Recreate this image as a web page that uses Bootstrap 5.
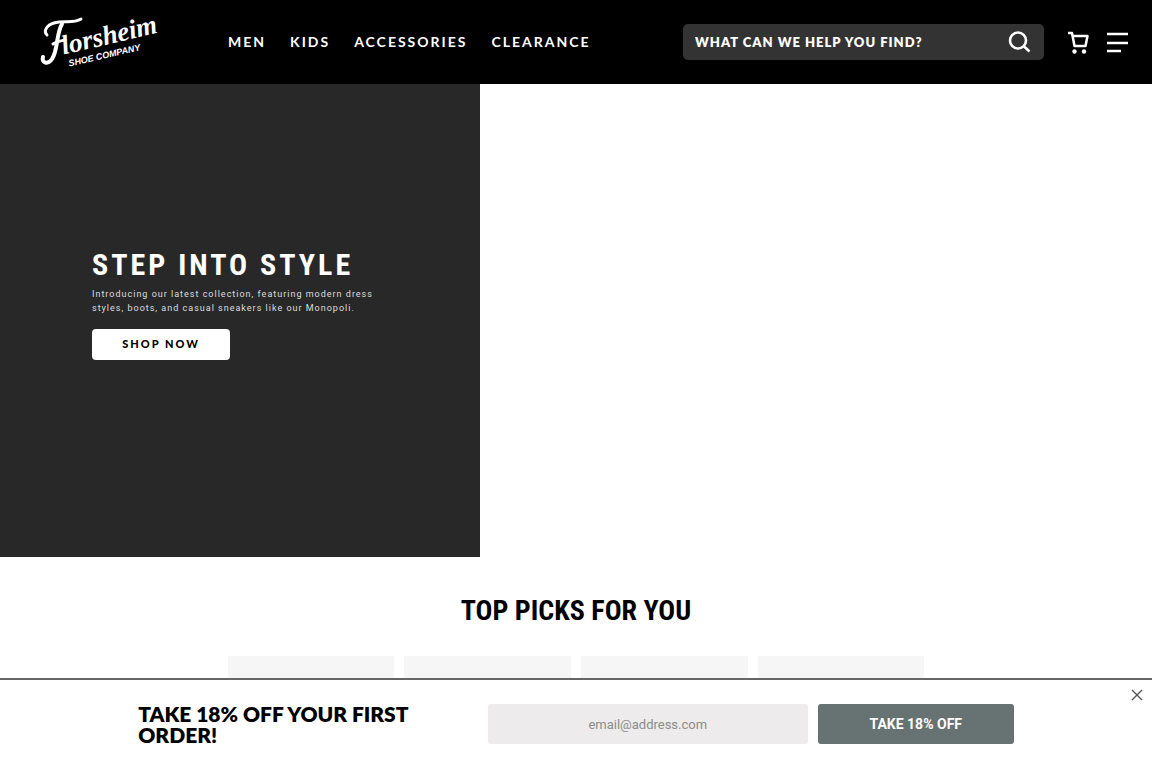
<!DOCTYPE html>
<html lang="en">
<head>
<meta charset="utf-8">
<meta name="viewport" content="width=device-width, initial-scale=1">
<title>Florsheim Shoe Company</title>
<link rel="stylesheet" href="https://cdn.jsdelivr.net/npm/bootstrap@5.3.0/dist/css/bootstrap.min.css">
<style>
  body { font-family: Lato, "Liberation Sans", sans-serif; background: #fff; color: #000; overflow-x: hidden; }
  .site-header { min-height: 84px; background: #000; padding: 0 24px 0 40px; }
  .brand-link { width: 120px; height: 56px; margin-right: 68px; }
  .brand-link svg { overflow: visible; }
  .main-links { gap: 24px; }
  .main-links a { color: #fff; font-size: 14px; line-height: 20px; font-weight: 700; letter-spacing: 2px; text-decoration: none; }
  .search-box { width: 361px; height: 36px; background: #333; border-radius: 5px; padding: 0 13px 0 12px; }
  .search-box input { background: none; border: 0; outline: 0; color: #fff; font-size: 13px; line-height: 20px; font-weight: 800; letter-spacing: 1px; padding: 0; min-width: 0; }
  .search-box input::placeholder { color: #fff; opacity: 1; }
  .icon-btn { background: none; border: 0; padding: 0; line-height: 0; color: #fff; }
  .hero-panel { background: #282828; color: #fff; height: 473px; padding: 0 92px 34px; }
  .headline { font-family: "Roboto Condensed", Roboto, "Liberation Sans Narrow", sans-serif; font-weight: 700; font-size: 28px; line-height: 36px; margin: 0; white-space: nowrap; }
  .hero-panel .headline { font-size: 30px; letter-spacing: 3px; }
  .hero-copy { width: 300px; font-family: Roboto, sans-serif; font-size: 9px; line-height: 14px; letter-spacing: 1px; color: #ddd; margin: 4px 0 14px; }
  .shop-btn { width: 138px; height: 31px; background: #fff; color: #000; border: 0; border-radius: 4px; font-size: 11px; font-weight: 900; letter-spacing: 2px; padding: 0; }
  .picks .headline { margin: 36px 0 27px; }
  .pick-row { width: 61%; gap: 10px; padding: 0 3px; }
  .pick-tile { background: #f6f6f6; height: 100px; }
  .offer-bar { background: #fff; border-top: 2px solid #666; height: 90px; }
  .offer-inner { width: 76%; gap: 10px; }
  .offer-title { font-size: 21px; line-height: 21px; font-weight: 800; margin: 0; }
  .offer-title-col { flex: 1 1 0; padding-right: 40px; }
  .email-box { width: 320px; height: 40px; background: #edebec; border: 0; border-radius: 3px; text-align: center; font-family: Roboto, sans-serif; font-size: 13px; }
  .email-box::placeholder { color: #8b8b8b; opacity: 1; }
  .offer-btn { width: 196px; height: 40px; background: #677272; color: #fff; border: 0; border-radius: 3px; font-family: Roboto, sans-serif; font-size: 14px; font-weight: 700; padding: 0; }
  .offer-close { top: 9px; right: 9px; color: #555; }
</style>
</head>
<body>
<header class="site-header d-flex align-items-center">
  <a href="#" class="brand-link flex-shrink-0" aria-label="Florsheim Shoe Company">
    <svg width="120" height="56" viewBox="0 0 120 56" fill="#fff">
      <g transform="rotate(-13 18 48)">
        <text x="25" y="42" font-family="Liberation Serif, serif" font-size="27" font-style="italic" font-weight="700">lorsheim</text>
        <text x="28" y="55" font-family="Liberation Sans, sans-serif" font-size="9" font-style="italic" font-weight="700">SHOE COMPANY</text>
      </g>
      <g fill="none" stroke="#fff" stroke-linecap="round">
        <path d="M7 21C3 17 7 11 14 9C24 6 33 10 41 5" stroke-width="3"/>
        <path d="M22 10C16 20 18 37 12 45C8 51 1 49 3 43" stroke-width="4"/>
        <path d="M13 30C17 27 21 27 25 26" stroke-width="3"/>
      </g>
    </svg>
  </a>
  <nav class="main-links d-flex me-auto" aria-label="Main">
    <a href="#">MEN</a><a href="#">KIDS</a><a href="#">ACCESSORIES</a><a href="#">CLEARANCE</a>
  </nav>
  <form class="search-box d-flex align-items-center">
    <input class="flex-grow-1" type="search" aria-label="Search" placeholder="WHAT CAN WE HELP YOU FIND?">
    <button type="button" class="icon-btn" aria-label="Search">
      <svg width="23" height="22" viewBox="0 0 23 22" fill="none" stroke="currentColor" stroke-width="2.6"><circle cx="10" cy="9.500" r="8"/><path d="M15.500 15l6 5.500"/></svg>
    </button>
  </form>
  <button type="button" class="icon-btn ms-4" aria-label="Cart">
    <svg width="21" height="23" viewBox="0 0 21 23" fill="none" stroke="currentColor" stroke-width="2.5"><path d="M0 2h4l2.500 13h11l2-10H4.500" stroke-linejoin="round"/><g fill="currentColor" stroke="none"><circle cx="6.500" cy="20.500" r="2.200"/><circle cx="16" cy="20.500" r="2.200"/></g></svg>
  </button>
  <button type="button" class="icon-btn ms-3" aria-label="Menu">
    <svg width="23" height="22" viewBox="0 0 23 22" stroke="currentColor" stroke-width="2.400"><path d="M2 3h21M2 12h21M2 20h14"/></svg>
  </button>
</header>
<main>
  <section class="row g-0">
    <div class="col-5 hero-panel d-flex flex-column justify-content-center align-items-start">
      <h1 class="headline">STEP INTO STYLE</h1>
      <p class="hero-copy">Introducing our latest collection, featuring modern dress styles, boots, and casual sneakers like our Monopoli.</p>
      <button type="button" class="shop-btn">SHOP NOW</button>
    </div>
  </section>
  <section class="picks text-center">
    <h2 class="headline">TOP PICKS FOR YOU</h2>
    <div class="pick-row d-flex mx-auto">
      <div class="pick-tile flex-fill"></div><div class="pick-tile flex-fill"></div><div class="pick-tile flex-fill"></div><div class="pick-tile flex-fill"></div>
    </div>
  </section>
</main>
<aside class="offer-bar fixed-bottom" aria-label="Offer">
  <form class="offer-inner d-flex align-items-center h-100 mx-auto">
    <div class="offer-title-col"><h2 class="offer-title">TAKE 18% OFF YOUR FIRST ORDER!</h2></div>
    <input class="email-box" type="email" aria-label="Email address" placeholder="email@address.com">
    <button type="button" class="offer-btn">TAKE 18% OFF</button>
  </form>
  <button type="button" class="icon-btn offer-close position-absolute" aria-label="Close">
    <svg width="12" height="12" viewBox="0 0 12 12" stroke="currentColor" stroke-width="1.400"><path d="M1 1l10 10M11 1L1 11"/></svg>
  </button>
</aside>
<script src="https://cdn.jsdelivr.net/npm/bootstrap@5.3.0/dist/js/bootstrap.bundle.min.js"></script>
</body>
</html>
